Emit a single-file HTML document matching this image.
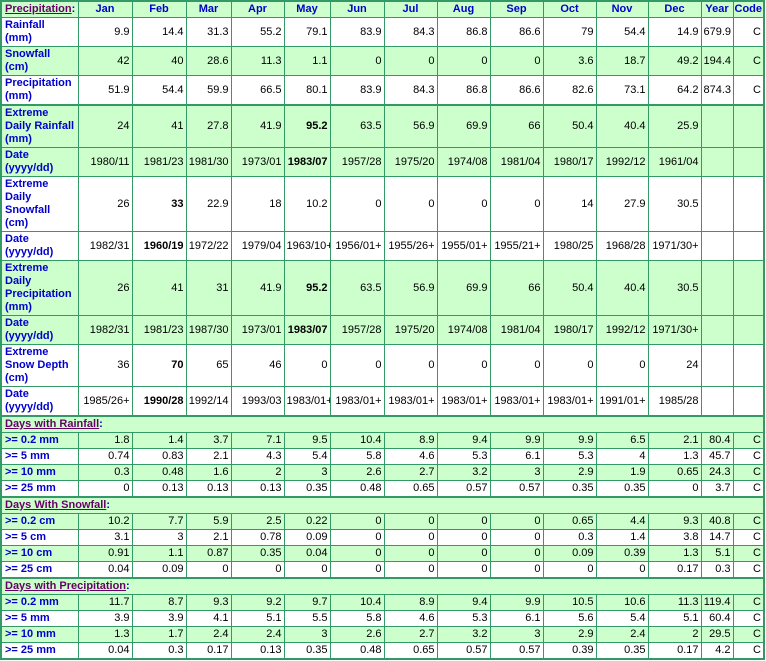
<!DOCTYPE html>
<html><head><meta charset="utf-8"><style>
body{margin:0;background:#fff;}
table{border-collapse:collapse;table-layout:fixed;width:765px;font-family:"Liberation Sans",sans-serif;font-size:11px;line-height:13px;border:2px solid #339966;}
td{border:1px solid #339966;padding:0 2px;text-align:right;color:#000;overflow:hidden;white-space:nowrap;}
td.l{text-align:left;color:#0000cc;font-weight:bold;white-space:normal;padding:0 3px;}
tr.h td{text-align:center;color:#0000cc;font-weight:bold;height:15px;padding:0;}
tr.h td.l{text-align:left;padding:0 3px;}
.g td{background:#ccffcc;}
.w td{background:#fff;}
.t td{border-top:2px solid #339966;}
.s td{text-align:left;font-weight:bold;color:#0000cc;height:15px;}
u{color:#660066;}
.r2 td{height:28px}.r3 td{height:41px}.r4 td{height:54px}.r1 td{height:15px}
b{font-weight:bold}
</style></head><body>
<table>
<colgroup><col style="width:77px"><col style="width:54px"><col style="width:54px"><col style="width:45px"><col style="width:53px"><col style="width:46px"><col style="width:54px"><col style="width:53px"><col style="width:53px"><col style="width:53px"><col style="width:53px"><col style="width:52px"><col style="width:53px"><col style="width:32px"><col style="width:31px"></colgroup>
<tr class="h g"><td class="l"><u>Precipitation</u>:</td><td>Jan</td><td>Feb</td><td>Mar</td><td>Apr</td><td>May</td><td>Jun</td><td>Jul</td><td>Aug</td><td>Sep</td><td>Oct</td><td>Nov</td><td>Dec</td><td>Year</td><td>Code</td></tr>
<tr class="w r2"><td class="l">Rainfall (mm)</td><td>9.9</td><td>14.4</td><td>31.3</td><td>55.2</td><td>79.1</td><td>83.9</td><td>84.3</td><td>86.8</td><td>86.6</td><td>79</td><td>54.4</td><td>14.9</td><td>679.9</td><td>C</td></tr>
<tr class="g r2"><td class="l">Snowfall (cm)</td><td>42</td><td>40</td><td>28.6</td><td>11.3</td><td>1.1</td><td>0</td><td>0</td><td>0</td><td>0</td><td>3.6</td><td>18.7</td><td>49.2</td><td>194.4</td><td>C</td></tr>
<tr class="w r2"><td class="l">Precipitation (mm)</td><td>51.9</td><td>54.4</td><td>59.9</td><td>66.5</td><td>80.1</td><td>83.9</td><td>84.3</td><td>86.8</td><td>86.6</td><td>82.6</td><td>73.1</td><td>64.2</td><td>874.3</td><td>C</td></tr>
<tr class="g r3 t"><td class="l">Extreme Daily Rainfall (mm)</td><td>24</td><td>41</td><td>27.8</td><td>41.9</td><td><b>95.2</b></td><td>63.5</td><td>56.9</td><td>69.9</td><td>66</td><td>50.4</td><td>40.4</td><td>25.9</td><td></td><td></td></tr>
<tr class="g r2"><td class="l">Date (yyyy/dd)</td><td>1980/11</td><td>1981/23</td><td>1981/30</td><td>1973/01</td><td><b>1983/07</b></td><td>1957/28</td><td>1975/20</td><td>1974/08</td><td>1981/04</td><td>1980/17</td><td>1992/12</td><td>1961/04</td><td></td><td></td></tr>
<tr class="w r4"><td class="l">Extreme Daily Snowfall (cm)</td><td>26</td><td><b>33</b></td><td>22.9</td><td>18</td><td>10.2</td><td>0</td><td>0</td><td>0</td><td>0</td><td>14</td><td>27.9</td><td>30.5</td><td></td><td></td></tr>
<tr class="w r2"><td class="l">Date (yyyy/dd)</td><td>1982/31</td><td><b>1960/19</b></td><td>1972/22</td><td>1979/04</td><td>1963/10+</td><td>1956/01+</td><td>1955/26+</td><td>1955/01+</td><td>1955/21+</td><td>1980/25</td><td>1968/28</td><td>1971/30+</td><td></td><td></td></tr>
<tr class="g r4"><td class="l">Extreme Daily Precipitation (mm)</td><td>26</td><td>41</td><td>31</td><td>41.9</td><td><b>95.2</b></td><td>63.5</td><td>56.9</td><td>69.9</td><td>66</td><td>50.4</td><td>40.4</td><td>30.5</td><td></td><td></td></tr>
<tr class="g r2"><td class="l">Date (yyyy/dd)</td><td>1982/31</td><td>1981/23</td><td>1987/30</td><td>1973/01</td><td><b>1983/07</b></td><td>1957/28</td><td>1975/20</td><td>1974/08</td><td>1981/04</td><td>1980/17</td><td>1992/12</td><td>1971/30+</td><td></td><td></td></tr>
<tr class="w r3"><td class="l">Extreme Snow Depth (cm)</td><td>36</td><td><b>70</b></td><td>65</td><td>46</td><td>0</td><td>0</td><td>0</td><td>0</td><td>0</td><td>0</td><td>0</td><td>24</td><td></td><td></td></tr>
<tr class="w r2"><td class="l">Date (yyyy/dd)</td><td>1985/26+</td><td><b>1990/28</b></td><td>1992/14</td><td>1993/03</td><td>1983/01+</td><td>1983/01+</td><td>1983/01+</td><td>1983/01+</td><td>1983/01+</td><td>1983/01+</td><td>1991/01+</td><td>1985/28</td><td></td><td></td></tr>
<tr class="g s t"><td colspan="15" class="l"><u>Days with Rainfall</u>:</td></tr>
<tr class="g r1"><td class="l">&gt;= 0.2 mm</td><td>1.8</td><td>1.4</td><td>3.7</td><td>7.1</td><td>9.5</td><td>10.4</td><td>8.9</td><td>9.4</td><td>9.9</td><td>9.9</td><td>6.5</td><td>2.1</td><td>80.4</td><td>C</td></tr>
<tr class="w r1"><td class="l">&gt;= 5 mm</td><td>0.74</td><td>0.83</td><td>2.1</td><td>4.3</td><td>5.4</td><td>5.8</td><td>4.6</td><td>5.3</td><td>6.1</td><td>5.3</td><td>4</td><td>1.3</td><td>45.7</td><td>C</td></tr>
<tr class="g r1"><td class="l">&gt;= 10 mm</td><td>0.3</td><td>0.48</td><td>1.6</td><td>2</td><td>3</td><td>2.6</td><td>2.7</td><td>3.2</td><td>3</td><td>2.9</td><td>1.9</td><td>0.65</td><td>24.3</td><td>C</td></tr>
<tr class="w r1"><td class="l">&gt;= 25 mm</td><td>0</td><td>0.13</td><td>0.13</td><td>0.13</td><td>0.35</td><td>0.48</td><td>0.65</td><td>0.57</td><td>0.57</td><td>0.35</td><td>0.35</td><td>0</td><td>3.7</td><td>C</td></tr>
<tr class="g s t"><td colspan="15" class="l"><u>Days With Snowfall</u>:</td></tr>
<tr class="g r1"><td class="l">&gt;= 0.2 cm</td><td>10.2</td><td>7.7</td><td>5.9</td><td>2.5</td><td>0.22</td><td>0</td><td>0</td><td>0</td><td>0</td><td>0.65</td><td>4.4</td><td>9.3</td><td>40.8</td><td>C</td></tr>
<tr class="w r1"><td class="l">&gt;= 5 cm</td><td>3.1</td><td>3</td><td>2.1</td><td>0.78</td><td>0.09</td><td>0</td><td>0</td><td>0</td><td>0</td><td>0.3</td><td>1.4</td><td>3.8</td><td>14.7</td><td>C</td></tr>
<tr class="g r1"><td class="l">&gt;= 10 cm</td><td>0.91</td><td>1.1</td><td>0.87</td><td>0.35</td><td>0.04</td><td>0</td><td>0</td><td>0</td><td>0</td><td>0.09</td><td>0.39</td><td>1.3</td><td>5.1</td><td>C</td></tr>
<tr class="w r1"><td class="l">&gt;= 25 cm</td><td>0.04</td><td>0.09</td><td>0</td><td>0</td><td>0</td><td>0</td><td>0</td><td>0</td><td>0</td><td>0</td><td>0</td><td>0.17</td><td>0.3</td><td>C</td></tr>
<tr class="g s t"><td colspan="15" class="l"><u>Days with Precipitation</u>:</td></tr>
<tr class="g r1"><td class="l">&gt;= 0.2 mm</td><td>11.7</td><td>8.7</td><td>9.3</td><td>9.2</td><td>9.7</td><td>10.4</td><td>8.9</td><td>9.4</td><td>9.9</td><td>10.5</td><td>10.6</td><td>11.3</td><td>119.4</td><td>C</td></tr>
<tr class="w r1"><td class="l">&gt;= 5 mm</td><td>3.9</td><td>3.9</td><td>4.1</td><td>5.1</td><td>5.5</td><td>5.8</td><td>4.6</td><td>5.3</td><td>6.1</td><td>5.6</td><td>5.4</td><td>5.1</td><td>60.4</td><td>C</td></tr>
<tr class="g r1"><td class="l">&gt;= 10 mm</td><td>1.3</td><td>1.7</td><td>2.4</td><td>2.4</td><td>3</td><td>2.6</td><td>2.7</td><td>3.2</td><td>3</td><td>2.9</td><td>2.4</td><td>2</td><td>29.5</td><td>C</td></tr>
<tr class="w r1"><td class="l">&gt;= 25 mm</td><td>0.04</td><td>0.3</td><td>0.17</td><td>0.13</td><td>0.35</td><td>0.48</td><td>0.65</td><td>0.57</td><td>0.57</td><td>0.39</td><td>0.35</td><td>0.17</td><td>4.2</td><td>C</td></tr>
</table>
</body></html>
